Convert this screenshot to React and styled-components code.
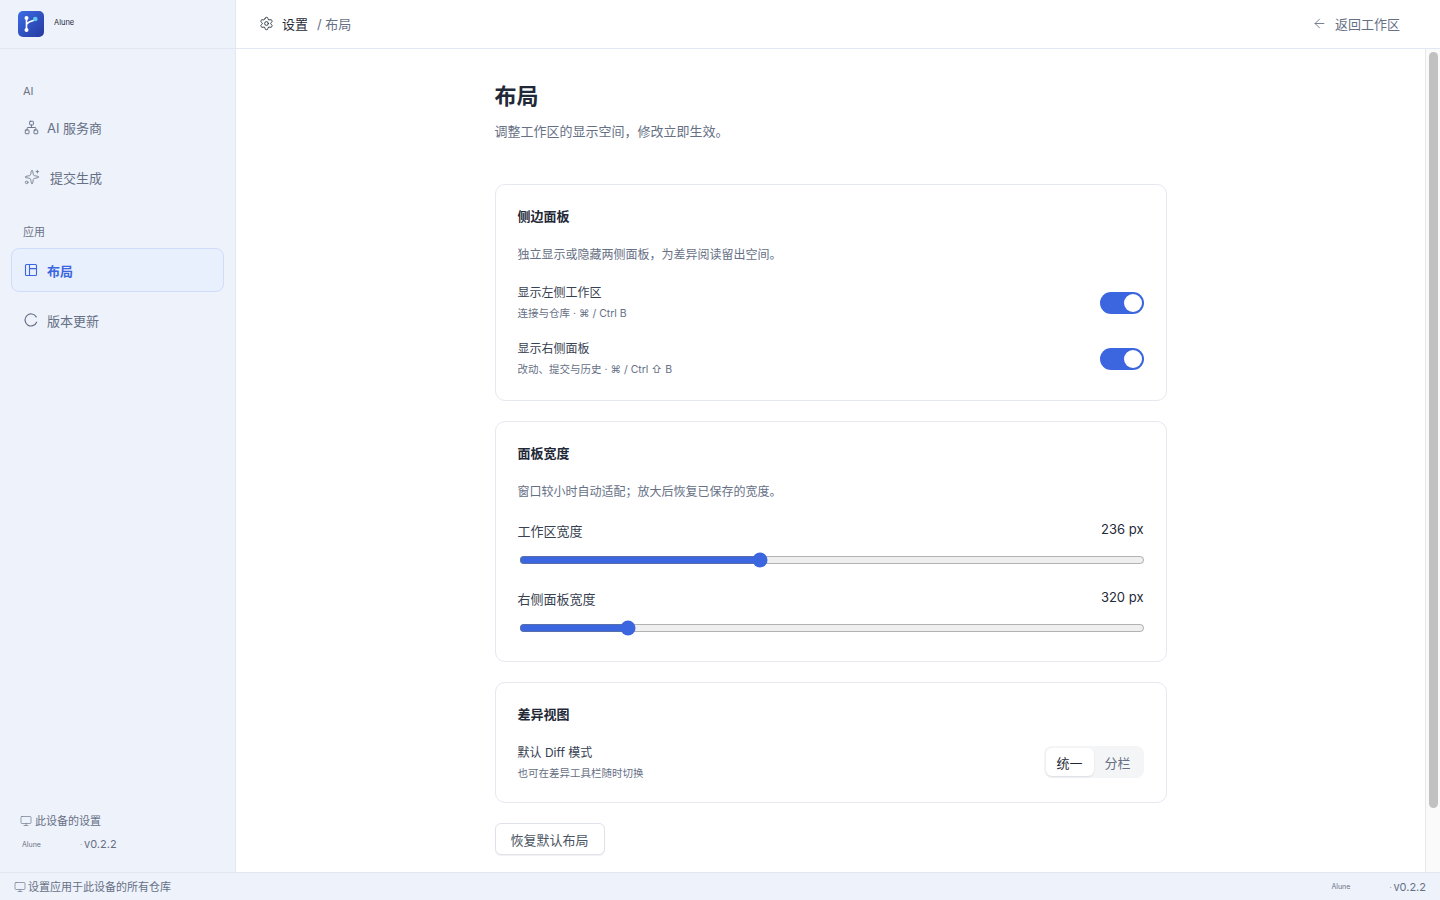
import React from 'react'
import styled, { createGlobalStyle, css } from 'styled-components'
import { ArrowLeft, Monitor, Network, Settings, Sparkles } from 'lucide-react'

const GlobalStyle = createGlobalStyle`
  html, body, #root {
    height: 100%;
    margin: 0;
  }
  body {
    font-family: Inter, "Noto Sans CJK SC", sans-serif;
    color: #1f2937;
    background: #fff;
    overflow: hidden;
  }
  * {
    box-sizing: border-box;
  }
`

const Shell = styled.div`
  display: flex;
  flex-direction: column;
  height: 900px;
`

const Body = styled.div`
  display: flex;
  flex: 1;
  min-height: 0;
`

const Sidebar = styled.aside`
  display: flex;
  flex-direction: column;
  width: 236px;
  background: #eef2fb;
  border-right: 1px solid #e2e7f2;
`

const Brand = styled.div`
  display: flex;
  align-items: center;
  gap: 10px;
  height: 49px;
  padding: 0 18px 1px;
  border-bottom: 1px solid #e2e7f2;
`

const BrandName = styled.span`
  font-size: 7.5px;
  padding-bottom: 2px;
  color: #1f2937;
`

const Nav = styled.nav`
  display: flex;
  flex-direction: column;
  flex: 1;
  padding: 0 11px;
`

const GroupLabel = styled.div`
  font-size: 11px;
  line-height: 14px;
  color: #6b7385;
  padding-left: 12px;
  margin-top: ${p => p.$top}px;
  margin-bottom: ${p => p.$bottom}px;
`

const NavItem = styled.div`
  display: flex;
  align-items: center;
  gap: ${p => p.$gap || 10}px;
  height: 44px;
  padding: 0 12px;
  margin-bottom: 6px;
  font-size: 13px;
  color: #667085;
  border: 1px solid transparent;
  border-radius: 8px;

  ${p => p.$active && css`
    color: #3b66e0;
    font-weight: 600;
    background: #e8effd;
    border-color: #d0ddfa;
  `}
`

const SideFoot = styled.div`
  display: flex;
  flex-direction: column;
  gap: 9px;
  padding: 0 20px 21px;
`

const FootNote = styled.div`
  display: flex;
  align-items: center;
  gap: ${p => p.$gap || 2}px;
  font-size: 11px;
  line-height: 14px;
  color: #667085;
`

const VersionRow = styled.div`
  display: flex;
  align-items: center;
  padding-left: 2px;
  height: 14px;
`

const TinyName = styled.span`
  font-size: 7px;
  color: #6b7385;
  width: ${p => p.$w}px;
`

const Dot = styled.span`
  font-size: 8px;
  color: #8a92a3;
  width: 4px;
`

const Version = styled.span`
  font-size: 11px;
  color: #667085;
`

const Page = styled.div`
  display: flex;
  flex-direction: column;
  flex: 1;
  min-width: 0;
`

const TopBar = styled.header`
  display: flex;
  align-items: center;
  justify-content: space-between;
  height: 49px;
  padding: 0 40px 1px 23px;
  border-bottom: 1px solid #e2e7f2;
`

const Crumbs = styled.div`
  display: flex;
  align-items: center;
  font-size: 13px;
  color: #1f2937;
`

const CrumbCurrent = styled.span`
  margin-left: 8px;
`

const CrumbRest = styled.span`
  margin-left: 9px;
  color: #667085;
`

const BackLink = styled.div`
  display: flex;
  align-items: center;
  gap: 8px;
  font-size: 13px;
  color: #667085;
`

const ScrollArea = styled.div`
  display: flex;
  flex: 1;
  min-height: 0;
`

const Scroller = styled.main`
  flex: 1;
  overflow: hidden;
`

const ScrollTrack = styled.div`
  width: 15px;
  padding: 3px 2px 0 3px;
  background: #fafafa;
  border-left: 1px solid #e8e8e8;
`

const ScrollThumb = styled.div`
  height: 756px;
  border-radius: 5px;
  background: #c1c1c1;
`

const Content = styled.div`
  width: 672px;
  margin: 0 auto;
  padding: 32px 0 40px;
`

const Title = styled.h1`
  margin: 0;
  font-size: 22px;
  line-height: 30px;
  font-weight: 600;
  color: #1f2937;
`

const Lead = styled.p`
  margin: 10px 0 0;
  font-size: 13px;
  line-height: 20px;
  color: #667085;
`

const Card = styled.section`
  margin-top: ${p => p.$top || 20}px;
  padding: 22px 22px 0;
  height: ${p => p.$h}px;
  border: 1px solid #e6e8f0;
  border-radius: 10px;
  background: #fff;
`

const CardTitle = styled.h2`
  margin: 0;
  font-size: 13px;
  line-height: 18px;
  font-weight: 600;
  color: #1f2937;
`

const CardDesc = styled.p`
  margin: 21px 0 0;
  font-size: 12px;
  line-height: 18px;
  color: #667085;
`

const Row = styled.div`
  display: flex;
  align-items: center;
  justify-content: space-between;
  margin-top: ${p => p.$top}px;
`

const RowText = styled.div`
  display: flex;
  flex-direction: column;
  gap: 4px;
`

const RowLabel = styled.div`
  font-size: 12px;
  line-height: 18px;
  color: #374151;
`

const RowHint = styled.div`
  font-size: 10.5px;
  line-height: 16px;
  color: #667085;
`

const Toggle = styled.button`
  position: relative;
  width: 44px;
  height: 22px;
  padding: 0;
  border: none;
  border-radius: 11px;
  background: #3b66e0;

  &::after {
    content: '';
    position: absolute;
    top: 2px;
    right: 2px;
    width: 18px;
    height: 18px;
    border-radius: 50%;
    background: #fff;
  }
`

const SliderHead = styled.div`
  display: flex;
  align-items: flex-start;
  justify-content: space-between;
  margin-top: ${p => p.$top}px;
  height: 18px;
`

const SliderLabel = styled.span`
  font-size: 13px;
  line-height: 18px;
  margin-top: 2px;
  color: #374151;
`

const SliderValue = styled.span`
  font-size: 13px;
  line-height: 18px;
  color: #1f2937;
`

const Range = styled.input`
  display: block;
  width: 100%;
  height: 16px;
  margin: 14px 0 0 1px;
  padding: 0;
  accent-color: #3b66e0;
`

const Segment = styled.div`
  display: flex;
  padding: 2px;
  margin-bottom: 2px;
  border-radius: 8px;
  background: #f4f5f7;
`

const SegmentItem = styled.button`
  width: ${p => p.$w}px;
  height: 28px;
  padding: 0;
  border: none;
  border-radius: 6px;
  font-family: inherit;
  font-size: 13px;
  color: #667085;
  background: transparent;

  ${p => p.$active && css`
    color: #1f2937;
    background: #fff;
    box-shadow: 0 1px 2px rgba(15, 23, 42, 0.1);
  `}
`

const ResetButton = styled.button`
  display: block;
  width: 110px;
  height: 32px;
  margin-top: 20px;
  padding: 0;
  border: 1px solid #dfe2ea;
  border-radius: 6px;
  font-family: inherit;
  font-size: 13px;
  color: #4b5563;
  background: #fff;
  box-shadow: 0 1px 1px rgba(15, 23, 42, 0.06);
`

const StatusBar = styled.footer`
  display: flex;
  align-items: center;
  justify-content: space-between;
  height: 28px;
  padding: 0 14px;
  background: #eef2fb;
  border-top: 1px solid #e2e7f2;
`

const StatusRight = styled.div`
  display: flex;
  align-items: center;
`

function Logo() {
  return (
    <svg width="26" height="26" viewBox="0 0 26 26">
      <defs>
        <linearGradient id="logoFill" x1="0" y1="0" x2="1" y2="1">
          <stop offset="0" stopColor="#3b6ce6" />
          <stop offset="1" stopColor="#27399f" />
        </linearGradient>
      </defs>
      <rect width="26" height="26" rx="5" fill="url(#logoFill)" />
      <path d="M8.5 7v12M8.5 14c0-2.5 3-3 8-5" fill="none" stroke="#fff" strokeWidth="1.6" />
      <circle cx="8.5" cy="7" r="2" fill="#fff" />
      <circle cx="8.5" cy="19" r="2" fill="#fff" />
      <circle cx="17.3" cy="8" r="2.3" fill="#5fc8ee" />
    </svg>
  )
}

function LayoutIcon() {
  return (
    <svg width="14" height="14" viewBox="0 0 14 14" fill="none" stroke="currentColor" strokeWidth="1.1">
      <rect x="1.5" y="1.5" width="11" height="11" rx="1" />
      <path d="M5.5 1.5v11M5.5 5.6h7" />
    </svg>
  )
}

function RingIcon() {
  return (
    <svg width="14" height="14" viewBox="0 0 14 14" fill="none" stroke="currentColor" strokeWidth="1.2" strokeLinecap="round">
      <path d="M12.2 3.9A6 6 0 1 0 12.6 9.2" />
    </svg>
  )
}

export default function App() {
  return (
    <Shell>
      <GlobalStyle />
      <Body>
        <Sidebar>
          <Brand>
            <Logo />
            <BrandName>Alune</BrandName>
          </Brand>
          <Nav>
            <GroupLabel $top={35} $bottom={7}>AI</GroupLabel>
            <NavItem $gap={8}>
              <Network size={15} strokeWidth={1.5} />
              AI 服务商
            </NavItem>
            <NavItem>
              <Sparkles size={16} strokeWidth={1.2} />
              提交生成
            </NavItem>
            <GroupLabel $top={20} $bottom={9}>应用</GroupLabel>
            <NavItem $active $gap={9}>
              <LayoutIcon />
              布局
            </NavItem>
            <NavItem $gap={9}>
              <RingIcon />
              版本更新
            </NavItem>
          </Nav>
          <SideFoot>
            <FootNote $gap={3}>
              <Monitor size={12} strokeWidth={1.3} />
              此设备的设置
            </FootNote>
            <VersionRow>
              <TinyName $w={58}>Alune</TinyName>
              <Dot>·</Dot>
              <Version>v0.2.2</Version>
            </VersionRow>
          </SideFoot>
        </Sidebar>
        <Page>
          <TopBar>
            <Crumbs>
              <Settings size={15} strokeWidth={1.4} />
              <CrumbCurrent>设置</CrumbCurrent>
              <CrumbRest>/ 布局</CrumbRest>
            </Crumbs>
            <BackLink>
              <ArrowLeft size={15} strokeWidth={1.4} />
              返回工作区
            </BackLink>
          </TopBar>
          <ScrollArea>
            <Scroller>
              <Content>
                <Title>布局</Title>
                <Lead>调整工作区的显示空间，修改立即生效。</Lead>

                <Card $top={43} $h={217}>
                  <CardTitle>侧边面板</CardTitle>
                  <CardDesc>独立显示或隐藏两侧面板，为差异阅读留出空间。</CardDesc>
                  <Row $top={20}>
                    <RowText>
                      <RowLabel>显示左侧工作区</RowLabel>
                      <RowHint>连接与仓库 · ⌘ / Ctrl B</RowHint>
                    </RowText>
                    <Toggle aria-label="显示左侧工作区" />
                  </Row>
                  <Row $top={18}>
                    <RowText>
                      <RowLabel>显示右侧面板</RowLabel>
                      <RowHint>改动、提交与历史 · ⌘ / Ctrl ⇧ B</RowHint>
                    </RowText>
                    <Toggle aria-label="显示右侧面板" />
                  </Row>
                </Card>

                <Card $h={241}>
                  <CardTitle>面板宽度</CardTitle>
                  <CardDesc>窗口较小时自动适配；放大后恢复已保存的宽度。</CardDesc>
                  <SliderHead $top={19}>
                    <SliderLabel>工作区宽度</SliderLabel>
                    <SliderValue>236 px</SliderValue>
                  </SliderHead>
                  <Range type="range" min={180} max={326} defaultValue={236} />
                  <SliderHead $top={20}>
                    <SliderLabel>右侧面板宽度</SliderLabel>
                    <SliderValue>320 px</SliderValue>
                  </SliderHead>
                  <Range type="range" min={280} max={520} defaultValue={320} />
                </Card>

                <Card $h={121}>
                  <CardTitle>差异视图</CardTitle>
                  <Row $top={21}>
                    <RowText>
                      <RowLabel>默认 Diff 模式</RowLabel>
                      <RowHint>也可在差异工具栏随时切换</RowHint>
                    </RowText>
                    <Segment>
                      <SegmentItem $active $w={48}>统一</SegmentItem>
                      <SegmentItem $w={48}>分栏</SegmentItem>
                    </Segment>
                  </Row>
                </Card>

                <ResetButton>恢复默认布局</ResetButton>
              </Content>
            </Scroller>
            <ScrollTrack>
              <ScrollThumb />
            </ScrollTrack>
          </ScrollArea>
        </Page>
      </Body>
      <StatusBar>
        <FootNote>
          <Monitor size={12} strokeWidth={1.3} />
          设置应用于此设备的所有仓库
        </FootNote>
        <StatusRight>
          <TinyName $w={58}>Alune</TinyName>
          <Dot>·</Dot>
          <Version>v0.2.2</Version>
        </StatusRight>
      </StatusBar>
    </Shell>
  )
}
